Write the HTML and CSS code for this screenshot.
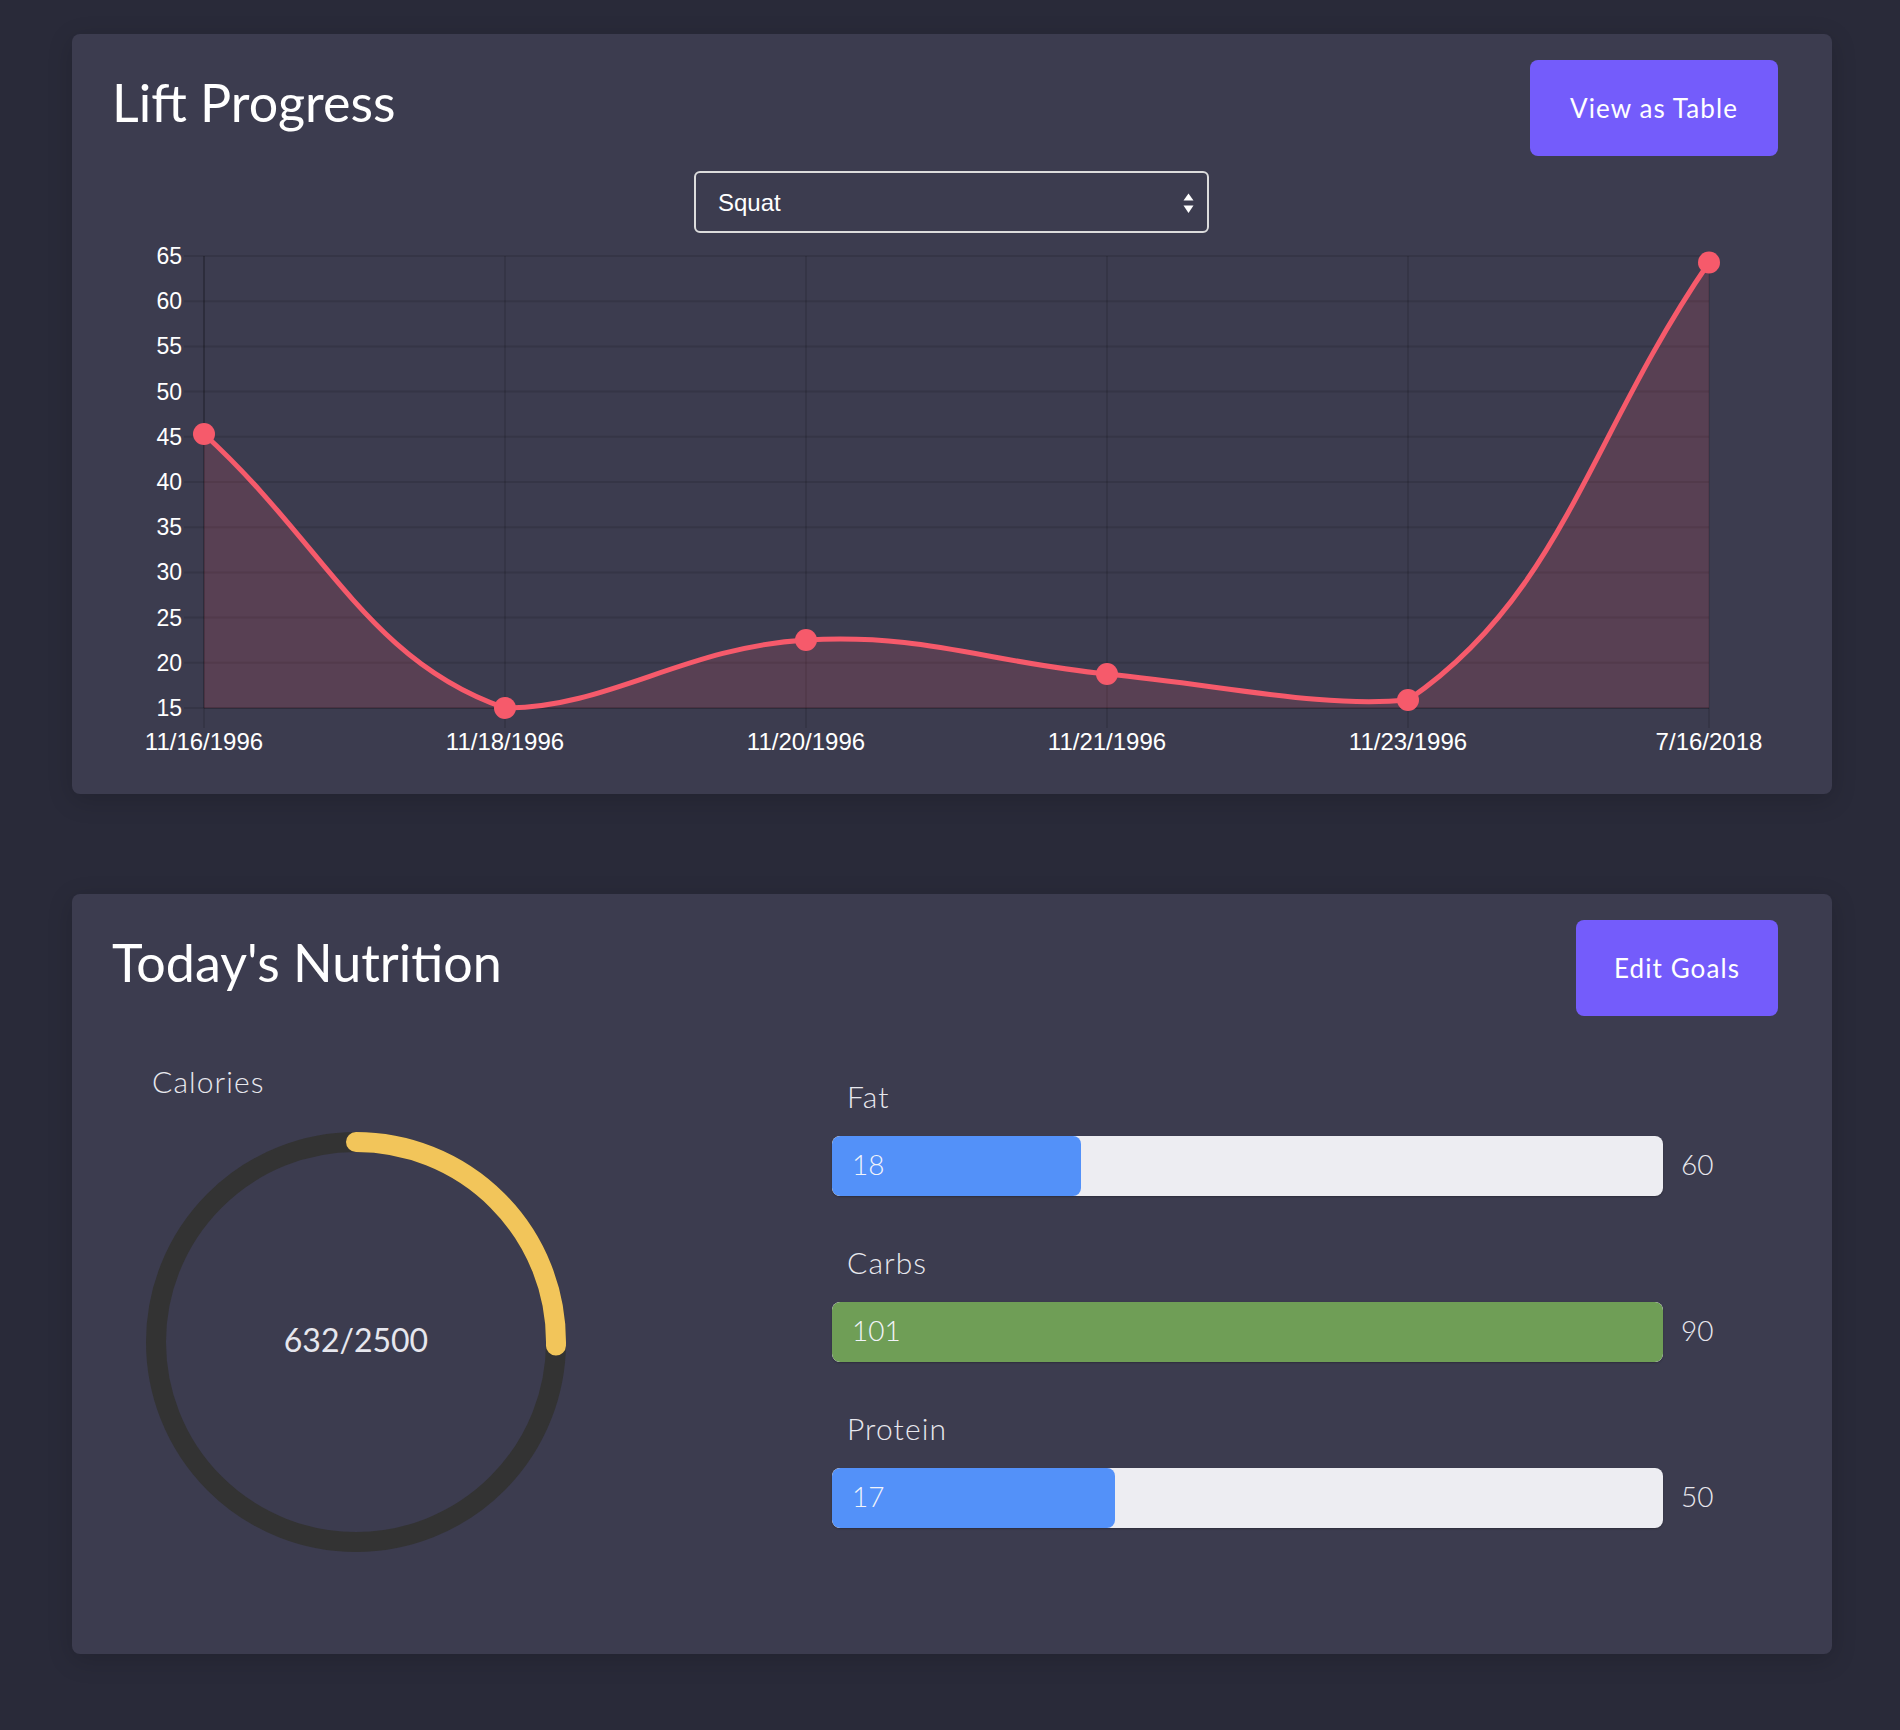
FILE: index.html
```html
<!DOCTYPE html>
<html lang="en">
<head>
<meta charset="utf-8">
<title>Dashboard</title>
<link rel="stylesheet" href="styles.css">
</head>
<body>
<main class="page">
  <section class="card">
    <header class="card-head">
      <h2 class="card-title">Lift Progress</h2>
      <button class="btn btn-table">View as Table</button>
    </header>
    <div class="lift-body">
      <div class="lift-select">
        <span class="lift-select-value">Squat</span>
        <svg class="select-arrows" width="11" height="21" viewBox="0 0 11 21"><path d="M0.5 7.5 L5.5 0.5 L10.5 7.5 Z"/><path d="M0.5 12.5 L10.5 12.5 L5.5 20 Z"/></svg>
      </div>
      <svg class="chart" width="1666" height="520" viewBox="112 240 1666 520">
        <g class="grid">
          <line x1="184" y1="256" x2="1709" y2="256"/>
          <line x1="184" y1="301.2" x2="1709" y2="301.2"/>
          <line x1="184" y1="346.4" x2="1709" y2="346.4"/>
          <line x1="184" y1="391.6" x2="1709" y2="391.6"/>
          <line x1="184" y1="436.8" x2="1709" y2="436.8"/>
          <line x1="184" y1="482" x2="1709" y2="482"/>
          <line x1="184" y1="527.2" x2="1709" y2="527.2"/>
          <line x1="184" y1="572.4" x2="1709" y2="572.4"/>
          <line x1="184" y1="617.6" x2="1709" y2="617.6"/>
          <line x1="184" y1="662.8" x2="1709" y2="662.8"/>
          <line x1="184" y1="708" x2="1709" y2="708"/>
          <line x1="204" y1="256" x2="204" y2="728"/>
          <line x1="505" y1="256" x2="505" y2="728"/>
          <line x1="806" y1="256" x2="806" y2="728"/>
          <line x1="1107" y1="256" x2="1107" y2="728"/>
          <line x1="1408" y1="256" x2="1408" y2="728"/>
          <line x1="1709" y1="256" x2="1709" y2="728"/>
        </g>
        <g class="axis">
          <line x1="204" y1="256" x2="204" y2="708"/>
          <line x1="204" y1="708" x2="1709" y2="708"/>
        </g>
        <path class="area" d="M204 434 C324.4 543.6 368 661.1 505 708 C608.8 708 684.5 646.9 806 640 C925.3 633.3 986.4 662 1107 674 C1227.2 686 1320.8 708 1408 700 C1561.6 595 1588.6 437.6 1709 262.5 L1709 708 L204 708 Z"/>
        <path class="line" d="M204 434 C324.4 543.6 368 661.1 505 708 C608.8 708 684.5 646.9 806 640 C925.3 633.3 986.4 662 1107 674 C1227.2 686 1320.8 708 1408 700 C1561.6 595 1588.6 437.6 1709 262.5"/>
        <g class="dots">
          <circle cx="204" cy="434" r="11"/>
          <circle cx="505" cy="708" r="11"/>
          <circle cx="806" cy="640" r="11"/>
          <circle cx="1107" cy="674" r="11"/>
          <circle cx="1408" cy="700" r="11"/>
          <circle cx="1709" cy="262.5" r="11"/>
        </g>
        <g class="y-labels">
          <text x="182" y="264">65</text>
          <text x="182" y="309.2">60</text>
          <text x="182" y="354.4">55</text>
          <text x="182" y="399.6">50</text>
          <text x="182" y="444.8">45</text>
          <text x="182" y="490">40</text>
          <text x="182" y="535.2">35</text>
          <text x="182" y="580.4">30</text>
          <text x="182" y="625.6">25</text>
          <text x="182" y="670.8">20</text>
          <text x="182" y="716">15</text>
        </g>
        <g class="x-labels">
          <text x="204" y="750">11/16/1996</text>
          <text x="505" y="750">11/18/1996</text>
          <text x="806" y="750">11/20/1996</text>
          <text x="1107" y="750">11/21/1996</text>
          <text x="1408" y="750">11/23/1996</text>
          <text x="1709" y="750">7/16/2018</text>
        </g>
      </svg>
    </div>
  </section>

  <section class="card">
    <header class="card-head">
      <h2 class="card-title">Today's Nutrition</h2>
      <button class="btn btn-goals">Edit Goals</button>
    </header>
    <div class="nutrition-body">
      <div class="calories">
        <div class="calories-label">Calories</div>
        <svg class="donut" width="420" height="420" viewBox="0 0 420 420">
          <circle class="donut-track" cx="210" cy="210" r="200"/>
          <circle class="donut-value" cx="210" cy="210" r="200" stroke-dasharray="317.7 1256.6" transform="rotate(-90 210 210)"/>
          <text class="donut-text" x="210" y="220">632/2500</text>
        </svg>
      </div>
      <div class="macros">
        <div class="macro">
          <div class="macro-label">Fat</div>
          <div class="macro-row">
            <div class="macro-bar"><div class="macro-fill fill-blue" style="width:30%"><span>18</span></div></div>
            <span class="macro-goal">60</span>
          </div>
        </div>
        <div class="macro">
          <div class="macro-label">Carbs</div>
          <div class="macro-row">
            <div class="macro-bar"><div class="macro-fill fill-green" style="width:100%"><span>101</span></div></div>
            <span class="macro-goal">90</span>
          </div>
        </div>
        <div class="macro">
          <div class="macro-label">Protein</div>
          <div class="macro-row">
            <div class="macro-bar"><div class="macro-fill fill-blue" style="width:34%"><span>17</span></div></div>
            <span class="macro-goal">50</span>
          </div>
        </div>
      </div>
    </div>
  </section>
</main>
</body>
</html>
```

FILE: styles.css
```css
* { box-sizing: border-box; }

html, body { margin: 0; }

body {
  background: #292a39;
  font-family: "Lato", "Open Sans", sans-serif;
  color: #ffffff;
}

.page {
  display: flex;
  flex-direction: column;
  gap: 100px;
  padding: 34px 68px 76px 72px;
}

.card {
  height: 760px;
  padding-top: 26px;
  background: #3c3c4f;
  border-radius: 8px;
  box-shadow: 0 6px 26px rgba(0, 0, 0, 0.16);
}

.card-head {
  display: flex;
  justify-content: space-between;
  align-items: flex-start;
  padding: 0 54px 0 40px;
}

.card-title {
  margin: 16px 0 0;
  font-size: 52px;
  font-weight: 400;
  line-height: 1;
  color: #ffffff;
}

.btn {
  height: 96px;
  padding: 0;
  border: 0;
  border-radius: 8px;
  background: #745cfb;
  color: #ffffff;
  font-family: inherit;
  font-size: 26px;
  font-weight: 400;
  letter-spacing: 1.1px;
  cursor: pointer;
}

.btn-table { width: 248px; }
.btn-goals { width: 202px; }

.lift-body {
  padding: 0 54px 0 40px;
}

.lift-select {
  display: flex;
  align-items: center;
  justify-content: space-between;
  width: 515px;
  height: 62px;
  margin: 15px 0 0 582px;
  padding: 2px 13px 0 22px;
  border: 2px solid #dcdcdc;
  border-radius: 6px;
  font-family: "Liberation Sans", Arial, sans-serif;
  font-size: 24px;
  color: #ffffff;
}

.select-arrows { fill: #ffffff; }

.chart {
  display: block;
  margin-top: 7px;
}

.grid line {
  stroke: rgba(0, 0, 0, 0.11);
  stroke-width: 2;
}

.axis line {
  stroke: rgba(0, 0, 0, 0.14);
  stroke-width: 2;
}

.area { fill: rgba(247, 90, 108, 0.15); }

.line {
  fill: none;
  stroke: #f65a6b;
  stroke-width: 5;
}

.dots circle { fill: #f65a6b; }

.y-labels text,
.x-labels text {
  font-family: "Liberation Sans", Arial, sans-serif;
  fill: #ffffff;
}

.y-labels text { font-size: 23px; text-anchor: end; }
.x-labels text { font-size: 24px; text-anchor: middle; }

.nutrition-body {
  display: flex;
  align-items: flex-start;
  margin-top: 50px;
  padding: 0 54px 0 40px;
}

.calories {
  width: 420px;
  margin-left: 34px;
}

.calories-label {
  margin-left: 6px;
  font-size: 30px;
  font-weight: 300;
  line-height: 1;
  letter-spacing: 1.1px;
  color: #e8e8ee;
}

.donut {
  display: block;
  margin-top: 36px;
}

.donut-track {
  fill: none;
  stroke: #333333;
  stroke-width: 20;
}

.donut-value {
  fill: none;
  stroke: #f2c55a;
  stroke-width: 20;
  stroke-linecap: round;
}

.donut-text {
  font-family: "Lato", "Open Sans", sans-serif;
  font-size: 32px;
  font-weight: 400;
  fill: #e6e7ee;
  text-anchor: middle;
}

.macros {
  display: flex;
  flex-direction: column;
  gap: 51px;
  margin-left: 266px;
  padding-top: 15px;
}

.macro-label {
  margin-left: 15px;
  font-size: 30px;
  font-weight: 300;
  line-height: 1;
  letter-spacing: 1.1px;
  color: #e8e8ee;
}

.macro-row {
  display: flex;
  align-items: center;
  margin-top: 25px;
}

.macro-bar {
  width: 831px;
  height: 60px;
  background: #ededf2;
  border-radius: 8px;
  box-shadow: 0 1px 2px rgba(0, 0, 0, 0.25);
  overflow: hidden;
}

.macro-fill {
  display: flex;
  align-items: center;
  height: 100%;
  padding: 0 0 4px 20px;
  border-radius: 8px;
  font-size: 28px;
  font-weight: 300;
  color: #f2f4fa;
}

.fill-blue { background: #5391f9; }
.fill-green { background: #6f9e56; }

.macro-goal {
  margin: 0 0 4px 18px;
  font-size: 28px;
  font-weight: 300;
  color: #e8e8ee;
}
```
